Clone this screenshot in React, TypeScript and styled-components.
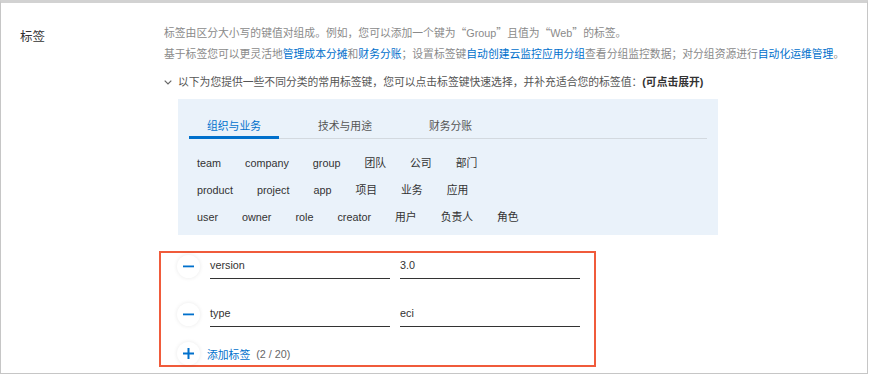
import React from 'react';
import styled, { createGlobalStyle } from 'styled-components';

const GlobalStyle = createGlobalStyle`
  html, body {
    margin: 0;
    padding: 0;
    background: #ffffff;
  }
  body {
    font-family: "Liberation Sans", "Noto Sans CJK SC", sans-serif;
    color: #333333;
  }
`;

const Frame = styled.div`
  box-sizing: border-box;
  width: 868px;
  height: 374px;
  border: 1px solid #c6c6c6;
  border-top: 3px solid #d2d2d2;
  padding: 20px 0 0 19px;
  display: flex;
  overflow: hidden;
`;

const FieldLabel = styled.div`
  width: 144px;
  flex: none;
  font-size: 12.5px;
  line-height: 20px;
  margin-top: 4px;
  color: #333333;
`;

const FieldBody = styled.div`
  flex: 1;
  min-width: 0;
  font-size: 10.8px;
`;

const Hint = styled.p`
  margin: 0;
  height: 21px;
  line-height: 21px;
  color: #8a8a8a;
  white-space: nowrap;
`;

const Quote = styled.span`
  font-family: "Noto Sans CJK SC", sans-serif;
  line-height: 1;
`;

const Link = styled.a`
  color: #0070cc;
  text-decoration: none;
`;

const ExpandLine = styled.div`
  margin-top: 7px;
  display: flex;
  align-items: center;
  height: 21px;
  line-height: 21px;
  color: #555555;
  white-space: nowrap;
  cursor: pointer;
`;

const Chevron = styled.svg`
  width: 8px;
  height: 5px;
  margin: 0 6px 0 0;
  flex: none;
`;

const Strong = styled.b`
  color: #333333;
  font-weight: 700;
`;

const Panel = styled.div`
  margin: 6px 0 0 14px;
  width: 540px;
  height: 136px;
  box-sizing: border-box;
  background: #eaf2fa;
  padding-top: 15px;
`;

const TabBar = styled.div`
  display: flex;
  margin: 0 11px;
  border-bottom: 1px solid #d3d9df;
`;

const Tab = styled.div<{ $active?: boolean }>`
  position: relative;
  padding: 0 18px;
  margin-right: 21px;
  line-height: 24px;
  color: ${({ $active }) => ($active ? '#0070cc' : '#555555')};
  cursor: pointer;

  &::after {
    content: '';
    display: ${({ $active }) => ($active ? 'block' : 'none')};
    position: absolute;
    left: 0;
    right: 0;
    bottom: -1px;
    height: 3px;
    background: #0070cc;
  }
`;

const KeyList = styled.div`
  margin-top: 11px;
  padding: 0 19px;
`;

const KeyRow = styled.div`
  display: flex;
  line-height: 27px;
`;

const KeyItem = styled.span`
  margin-right: 24px;
  color: #333333;
  cursor: pointer;
`;

const TagEditor = styled.div`
  margin: 16px 0 0 -5px;
  width: 437px;
  height: 116px;
  box-sizing: border-box;
  border: 2px solid #f05b3b;
  padding: 0 14px 0 16px;
  display: flex;
  flex-direction: column;
`;

const TagRow = styled.div<{ $last?: boolean }>`
  display: flex;
  align-items: center;
  gap: 10px;
  margin-bottom: ${({ $last }) => ($last ? '15px' : '22px')};
`;

const RoundButton = styled.button`
  width: 23px;
  height: 23px;
  flex: none;
  border: none;
  border-radius: 50%;
  background: #ffffff;
  box-shadow: 0 0 4px rgba(0, 0, 0, 0.09);
  padding: 0;
  display: flex;
  align-items: center;
  justify-content: center;
  cursor: pointer;
`;

const TagInput = styled.div`
  width: 180px;
  height: 26px;
  box-sizing: border-box;
  border-bottom: 1.5px solid #333333;
  line-height: 24px;
  font-size: 10.8px;
  color: #333333;
`;

const AddRow = styled.div`
  display: flex;
  align-items: center;
`;

const AddLink = styled.span`
  margin-left: 7px;
  color: #0070cc;
  cursor: pointer;
`;

const Counter = styled.span`
  margin-left: 6px;
  color: #666666;
`;

const MinusIcon = () => (
  <svg width="11" height="11" viewBox="0 0 11 11">
    <rect x="0" y="4.5" width="11" height="1.8" fill="#0070cc" />
  </svg>
);

const PlusIcon = () => (
  <svg width="11" height="11" viewBox="0 0 11 11">
    <rect x="0" y="4.5" width="11" height="2" fill="#0070cc" />
    <rect x="4.5" y="0" width="2" height="11" fill="#0070cc" />
  </svg>
);

const keyRows = [
  ['team', 'company', 'group', '团队', '公司', '部门'],
  ['product', 'project', 'app', '项目', '业务', '应用'],
  ['user', 'owner', 'role', 'creator', '用户', '负责人', '角色'],
];

const tags = [
  { key: 'version', value: '3.0' },
  { key: 'type', value: 'eci' },
];

export default function App() {
  return (
    <>
      <GlobalStyle />
      <Frame>
        <FieldLabel>标签</FieldLabel>
        <FieldBody>
          <Hint>
            标签由区分大小写的键值对组成。例如，您可以添加一个键为<Quote>“</Quote>Group<Quote>”</Quote>且值为
            <Quote>“</Quote>Web<Quote>”</Quote>的标签。
          </Hint>
          <Hint>
            基于标签您可以更灵活地<Link>管理成本分摊</Link>和<Link>财务分账</Link>；设置标签键
            <Link>自动创建云监控应用分组</Link>查看分组监控数据；对分组资源进行<Link>自动化运维管理</Link>。
          </Hint>
          <ExpandLine>
            <Chevron viewBox="0 0 8 5">
              <path d="M0.7 0.7 L4 4 L7.3 0.7" fill="none" stroke="#666" strokeWidth="1.2" />
            </Chevron>
            以下为您提供一些不同分类的常用标签键，您可以点击标签键快速选择，并补充适合您的标签值：
            <Strong>(可点击展开)</Strong>
          </ExpandLine>
          <Panel>
            <TabBar>
              <Tab $active>组织与业务</Tab>
              <Tab>技术与用途</Tab>
              <Tab>财务分账</Tab>
            </TabBar>
            <KeyList>
              {keyRows.map((row, i) => (
                <KeyRow key={i}>
                  {row.map((k) => (
                    <KeyItem key={k}>{k}</KeyItem>
                  ))}
                </KeyRow>
              ))}
            </KeyList>
          </Panel>
          <TagEditor>
            {tags.map((t, i) => (
              <TagRow key={t.key} $last={i === tags.length - 1}>
                <RoundButton>
                  <MinusIcon />
                </RoundButton>
                <TagInput>{t.key}</TagInput>
                <TagInput>{t.value}</TagInput>
              </TagRow>
            ))}
            <AddRow>
              <RoundButton>
                <PlusIcon />
              </RoundButton>
              <AddLink>添加标签</AddLink>
              <Counter>(2 / 20)</Counter>
            </AddRow>
          </TagEditor>
        </FieldBody>
      </Frame>
    </>
  );
}
